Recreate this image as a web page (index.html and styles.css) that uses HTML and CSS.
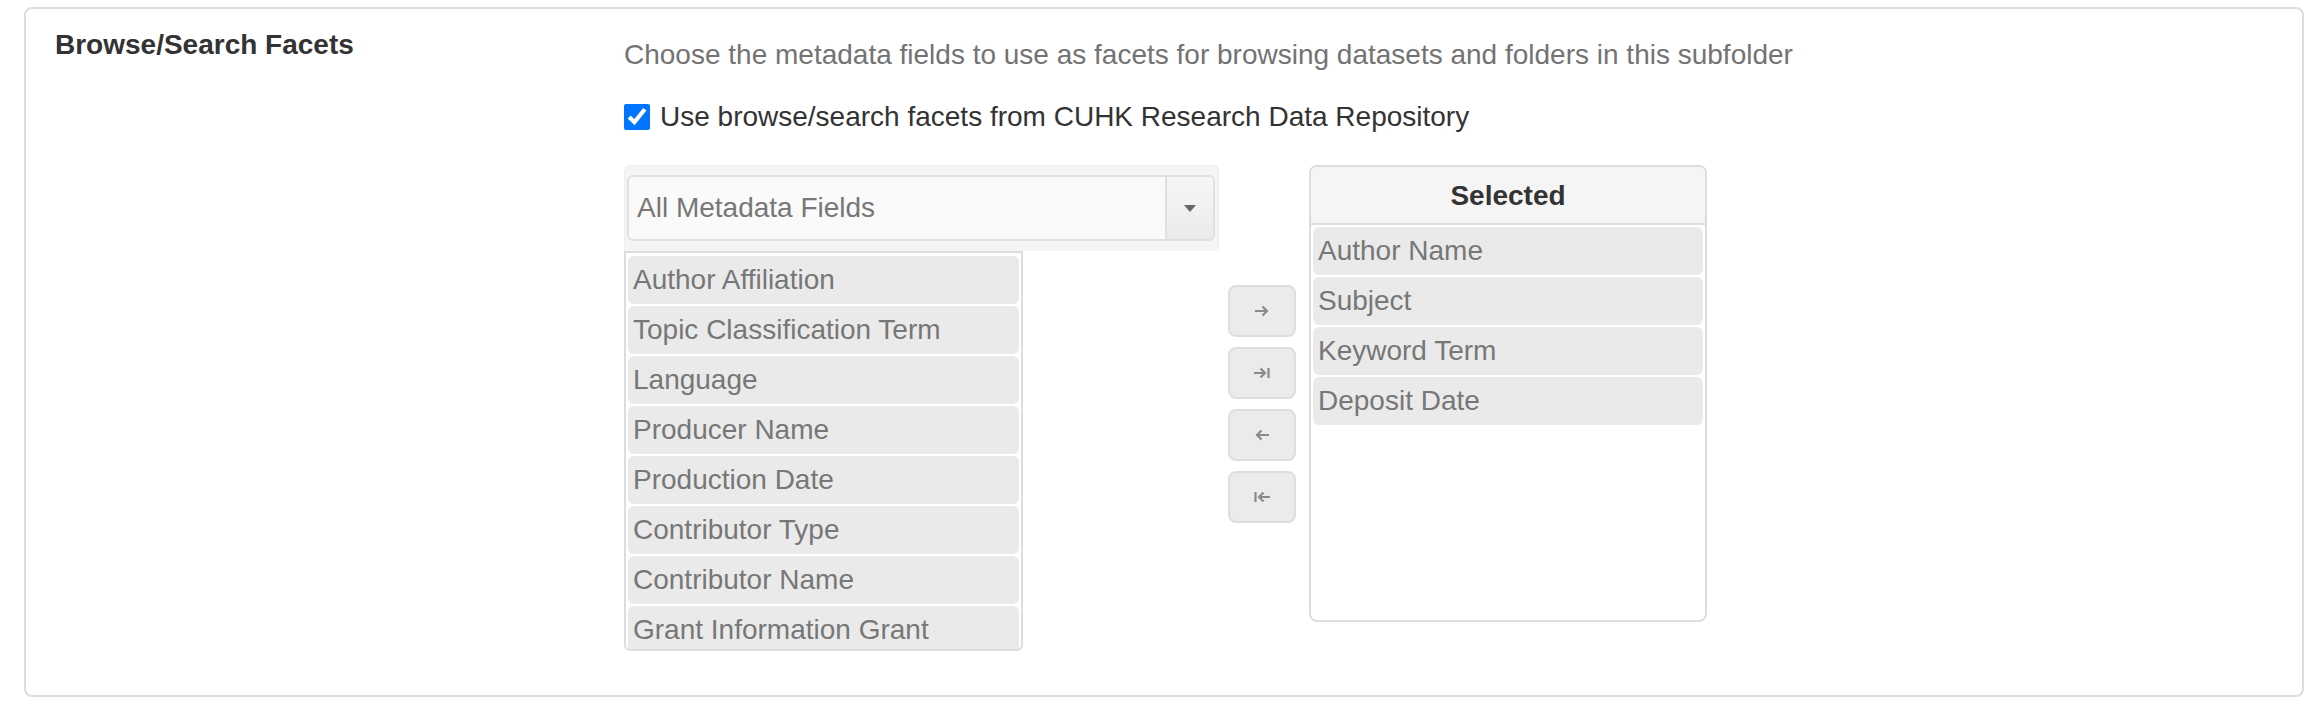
FILE: index.html
```html
<!DOCTYPE html>
<html lang="en">
<head>
<meta charset="utf-8">
<title>Browse/Search Facets</title>
<link rel="stylesheet" href="styles.css">
</head>
<body>
<div class="card">
  <div class="label-col">Browse/Search Facets</div>
  <div class="field-col">
    <p class="help">Choose the metadata fields to use as facets for browsing datasets and folders in this subfolder</p>
    <label class="check-row"><input type="checkbox" checked class="check"><span>Use browse/search facets from CUHK Research Data Repository</span></label>
    <div class="dual">
      <div class="dl-left">
        <div class="dl-filter">
          <div class="dl-select">
            <span class="dl-select-text">All Metadata Fields</span>
            <span class="dl-caret"><span class="tri"></span></span>
          </div>
        </div>
        <div class="dl-list">
          <div class="item">Author Affiliation</div>
          <div class="item">Topic Classification Term</div>
          <div class="item">Language</div>
          <div class="item">Producer Name</div>
          <div class="item">Production Date</div>
          <div class="item">Contributor Type</div>
          <div class="item">Contributor Name</div>
          <div class="item">Grant Information Grant</div>
        </div>
      </div>
      <div class="dl-buttons">
        <button class="btn" type="button" aria-label="Move selected">
          <svg width="18" height="12" viewBox="0 0 18 12"><path d="M2 6H14M9.5 1.5L14 6L9.5 10.5" fill="none" stroke="#8a8a8a" stroke-width="2.2"/></svg>
        </button>
        <button class="btn" type="button" aria-label="Move all">
          <svg width="18" height="12" viewBox="0 0 18 12"><path d="M1 6H12M7.5 1.5L12 6L7.5 10.5M15.5 1V11" fill="none" stroke="#8a8a8a" stroke-width="2.2"/></svg>
        </button>
        <button class="btn" type="button" aria-label="Remove selected">
          <svg width="18" height="12" viewBox="0 0 18 12"><path d="M16 6H4M8.5 1.5L4 6L8.5 10.5" fill="none" stroke="#8a8a8a" stroke-width="2.2"/></svg>
        </button>
        <button class="btn" type="button" aria-label="Remove all">
          <svg width="18" height="12" viewBox="0 0 18 12"><path d="M17 6H6M10.5 1.5L6 6L10.5 10.5M2.5 1V11" fill="none" stroke="#8a8a8a" stroke-width="2.2"/></svg>
        </button>
      </div>
      <div class="dl-right">
        <div class="dl-head">Selected</div>
        <div class="dl-sel-list">
          <div class="item">Author Name</div>
          <div class="item">Subject</div>
          <div class="item">Keyword Term</div>
          <div class="item">Deposit Date</div>
        </div>
      </div>
    </div>
  </div>
</div>
</body>
</html>
```
FILE: styles.css
```css
html, body {
  margin: 0;
  padding: 0;
  background: #fff;
}
body {
  font-family: "Liberation Sans", Arial, sans-serif;
  font-size: 28px;
  line-height: 40px;
  color: #333;
}
.card {
  margin: 7px 12px 0 24px;
  border: 2px solid #dddddd;
  border-radius: 8px;
  padding: 16px 29px 44px 29px;
  display: grid;
  grid-template-columns: 569px 1fr;
}
.label-col {
  font-weight: bold;
  color: #333;
}
.field-col {
  padding-top: 10px;
}
.help {
  margin: 0;
  color: #737373;
}
.check-row {
  margin-top: 22px;
  display: flex;
  align-items: center;
  gap: 10px;
  color: #333;
}
.check {
  width: 26px;
  height: 26px;
  margin: 0;
  accent-color: #0075ff;
}
.dual {
  margin-top: 28px;
  display: flex;
  align-items: flex-start;
}
.dl-left {
  width: 595px;
}
.dl-filter {
  box-sizing: border-box;
  height: 86px;
  background: #f5f5f5;
  border: 1px solid #eeeeee;
  border-bottom: none;
  border-radius: 6px 6px 0 0;
  padding: 9px 3px 0 2px;
}
.dl-select {
  box-sizing: border-box;
  height: 66px;
  display: flex;
  border: 2px solid #e0e0e0;
  border-radius: 6px;
  background: #fafafa;
  overflow: hidden;
}
.dl-select-text {
  flex: 1;
  padding-left: 8px;
  line-height: 62px;
  color: #777;
}
.dl-caret {
  width: 46px;
  border-left: 2px solid #e0e0e0;
  background: linear-gradient(#f6f6f6, #ebebeb);
  display: flex;
  align-items: center;
  justify-content: center;
}
.tri {
  width: 0;
  height: 0;
  border-left: 6px solid transparent;
  border-right: 6px solid transparent;
  border-top: 7px solid #666;
}
.dl-list {
  box-sizing: border-box;
  width: 399px;
  height: 400px;
  border: 2px solid #dddddd;
  border-radius: 0 0 6px 6px;
  padding: 3px 2px 2px;
  overflow: hidden;
  display: flex;
  flex-direction: column;
  gap: 2px;
}
.item {
  flex: none;
  height: 48px;
  line-height: 48px;
  padding-left: 5px;
  background: #eaeaea;
  border-radius: 6px;
  color: #777;
  white-space: nowrap;
}
.dl-buttons {
  width: 90px;
  box-sizing: border-box;
  padding: 120px 0 0 9px;
  display: flex;
  flex-direction: column;
  gap: 10px;
}
.btn {
  width: 68px;
  height: 52px;
  padding: 0;
  margin: 0;
  background: #ebebeb;
  border: 2px solid #dedede;
  border-radius: 8px;
  display: flex;
  align-items: center;
  justify-content: center;
}
.dl-right {
  box-sizing: border-box;
  width: 398px;
  height: 457px;
  border: 2px solid #dddddd;
  border-radius: 8px;
  overflow: hidden;
}
.dl-head {
  background: #f5f5f5;
  border-bottom: 2px solid #dddddd;
  padding: 9px 0 7px;
  text-align: center;
  font-weight: bold;
  color: #333;
}
.dl-sel-list {
  padding: 2px;
  display: flex;
  flex-direction: column;
  gap: 2px;
}
```
